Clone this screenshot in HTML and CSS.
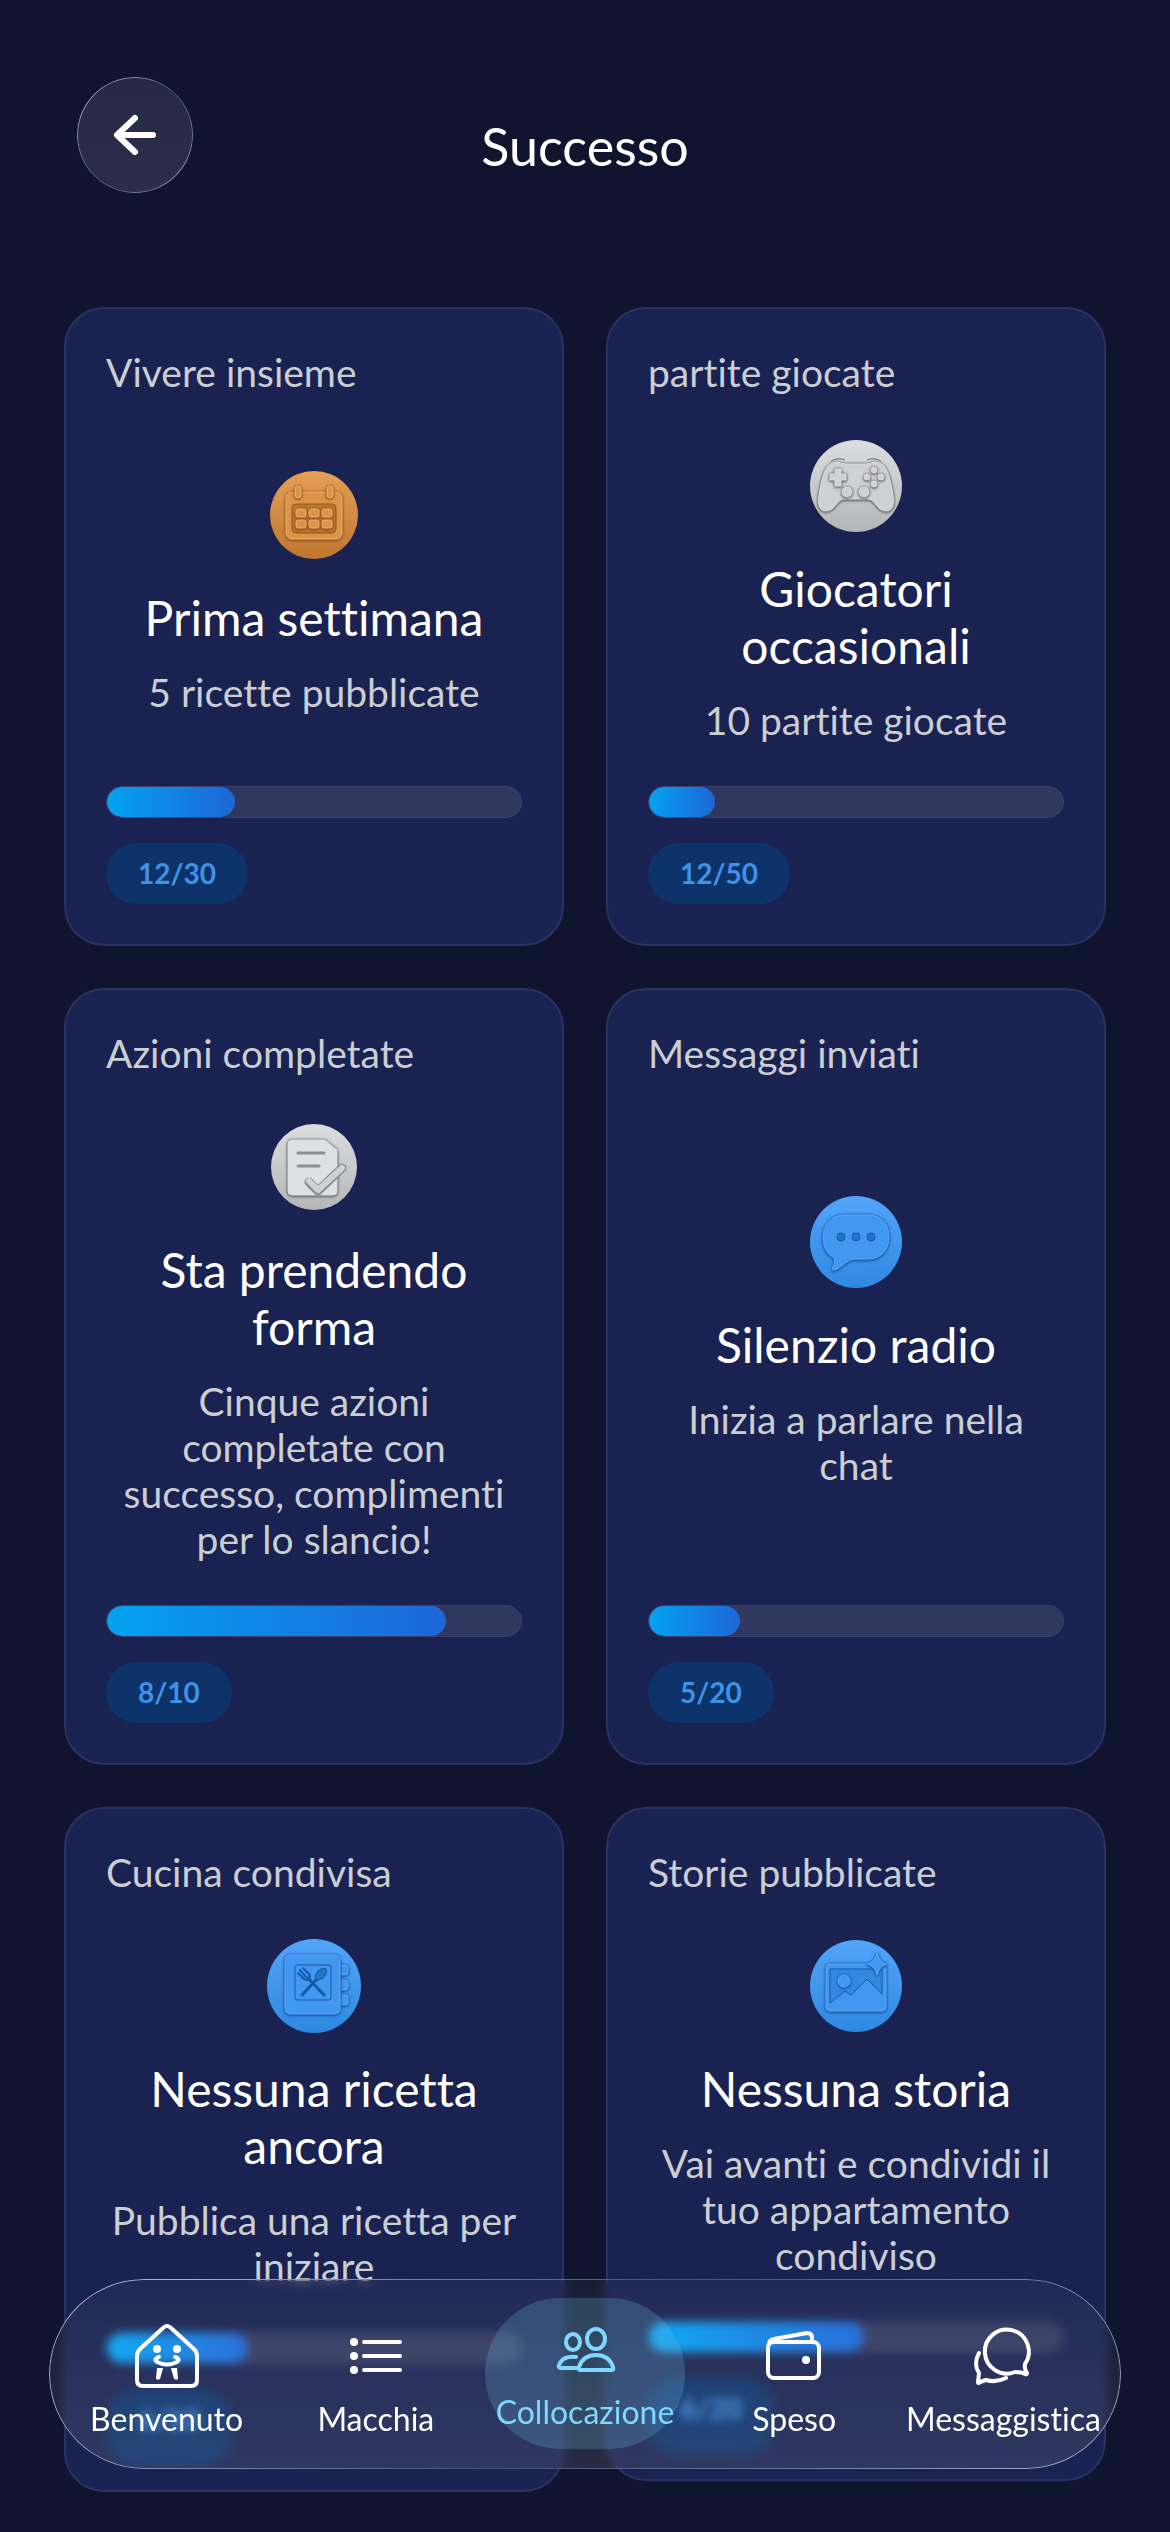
FILE: index.html
```html
<!DOCTYPE html>
<html lang="it">
<head>
    <meta charset="UTF-8">
    <meta name="viewport" content="width=device-width, initial-scale=1.0">
    <title>Successo</title>
    <link rel="stylesheet" href="styles.css">
</head>
<body>
    <!-- shared gradients for the badges -->
    <svg class="defs" width="0" height="0" aria-hidden="true">
        <defs>
            <linearGradient id="bronze" x1="0" y1="0" x2="0" y2="1">
                <stop offset="0" stop-color="#e6a055"/>
                <stop offset="1" stop-color="#bf7630"/>
            </linearGradient>
            <linearGradient id="silver" x1="0" y1="0" x2="0" y2="1">
                <stop offset="0" stop-color="#dcdddf"/>
                <stop offset="1" stop-color="#b4b6b8"/>
            </linearGradient>
            <linearGradient id="blue" x1="0" y1="0" x2="0" y2="1">
                <stop offset="0" stop-color="#52a5fa"/>
                <stop offset="1" stop-color="#2f88e0"/>
            </linearGradient>
        </defs>
    </svg>

    <header class="header">
        <button class="back" type="button" aria-label="Indietro">
            <svg width="48" height="48" viewBox="0 0 48 48"><path d="M24 7 6 24l18 17M7 24h35"/></svg>
        </button>
        <h1>Successo</h1>
    </header>

    <main class="grid">
        <article class="card">
            <h2 class="category">Vivere insieme</h2>
            <div class="content">
                <svg class="badge bronze" viewBox="0 0 96 96">
                    <circle cx="48" cy="48" r="44" fill="url(#bronze)"/>
                    <g class="raised">
                        <rect x="20" y="25" width="56" height="47" rx="6"/>
                    </g>
                    <rect class="sunken" x="26" y="37" width="44" height="29" rx="4"/>
                    <g class="raised">
                        <rect x="29" y="19" width="6" height="12" rx="3"/>
                        <rect x="61" y="19" width="6" height="12" rx="3"/>
                        <rect x="30" y="42" width="10" height="8" rx="2"/>
                        <rect x="43" y="42" width="10" height="8" rx="2"/>
                        <rect x="56" y="42" width="10" height="8" rx="2"/>
                        <rect x="30" y="53" width="10" height="8" rx="2"/>
                        <rect x="43" y="53" width="10" height="8" rx="2"/>
                        <rect x="56" y="53" width="10" height="8" rx="2"/>
                    </g>
                </svg>
                <h3>Prima settimana</h3>
                <p>5 ricette pubblicate</p>
            </div>
            <div class="progress" role="progressbar" aria-label="Prima settimana"><div class="fill" style="width: 31%"></div></div>
            <span class="count">12/30</span>
        </article>

        <article class="card">
            <h2 class="category">partite giocate</h2>
            <div class="content">
                <svg class="badge silver" viewBox="0 0 96 96">
                    <circle cx="48" cy="48" r="46" fill="url(#silver)"/>
                    <path class="edge" d="M23 23q7-4 14-1M59 22q7-3 14 1"/>
                    <g class="raised">
                        <path d="M30 24q3 2 8 2h20q5 0 8-2c12 0 14 10 17 22 3 14 5 27-5 27-9 0-11-12-18-12H36c-7 0-9 12-18 12-10 0-8-13-5-27 3-12 5-22 17-22z"/>
                    </g>
                    <g class="raised">
                        <path d="M27 31h6v5h5v6h-5v6h-6v-6h-5v-6h5z"/>
                        <circle cx="66" cy="32" r="3"/>
                        <circle cx="59" cy="39" r="3"/>
                        <circle cx="73" cy="39" r="3"/>
                        <circle cx="66" cy="46" r="3"/>
                        <circle cx="39" cy="54" r="5"/>
                        <circle cx="56" cy="54" r="5"/>
                    </g>
                </svg>
                <h3>Giocatori occasionali</h3>
                <p>10 partite giocate</p>
            </div>
            <div class="progress" role="progressbar" aria-label="Giocatori occasionali"><div class="fill" style="width: 16%"></div></div>
            <span class="count">12/50</span>
        </article>

        <article class="card">
            <h2 class="category">Azioni completate</h2>
            <div class="content">
                <svg class="badge silver" viewBox="0 0 96 96">
                    <circle cx="48" cy="48" r="43" fill="url(#silver)"/>
                    <g class="raised paper">
                        <path d="M26 21h33l12 10v41q0 4-4 4H26q-4 0-4-4V25q0-4 4-4z"/>
                    </g>
                    <path class="groove" d="M32 34h26M32 47h21"/>
                    <path class="tick-shadow" d="m43 63 9 9 24-23"/>
                    <path class="tick" d="m43 62 9 9 24-22"/>
                </svg>
                <h3>Sta prendendo forma</h3>
                <p>Cinque azioni completate con successo, complimenti per lo slancio!</p>
            </div>
            <div class="progress" role="progressbar" aria-label="Sta prendendo forma"><div class="fill" style="width: 82%"></div></div>
            <span class="count">8/10</span>
        </article>

        <article class="card">
            <h2 class="category">Messaggi inviati</h2>
            <div class="content">
                <svg class="badge blue" viewBox="0 0 96 96">
                    <circle cx="48" cy="48" r="46" fill="url(#blue)"/>
                    <g class="raised">
                        <path d="M37 21h23c13 0 21 9 21 22s-8 22-21 22H46c-7 0-12 9-20 11-2 0-2-1-1-3 2-4 2-6 1-9-7-4-11-11-11-20 0-14 9-23 22-23z"/>
                    </g>
                    <g class="sunken">
                        <circle cx="33" cy="43" r="4"/>
                        <circle cx="48" cy="43" r="4"/>
                        <circle cx="63" cy="43" r="4"/>
                    </g>
                </svg>
                <h3>Silenzio radio</h3>
                <p>Inizia a parlare nella chat</p>
            </div>
            <div class="progress" role="progressbar" aria-label="Silenzio radio"><div class="fill" style="width: 22%"></div></div>
            <span class="count">5/20</span>
        </article>

        <article class="card natural">
            <h2 class="category">Cucina condivisa</h2>
            <div class="content">
                <svg class="badge blue" viewBox="0 0 96 96">
                    <circle cx="48" cy="48" r="47" fill="url(#blue)"/>
                    <g class="raised">
                        <rect x="71" y="27" width="11" height="10" rx="3"/>
                        <rect x="71" y="42" width="11" height="10" rx="3"/>
                        <rect x="71" y="57" width="11" height="10" rx="3"/>
                    </g>
                    <g class="raised">
                        <rect x="19" y="17" width="55" height="59" rx="5"/>
                    </g>
                    <rect class="edge" x="29" y="27" width="36" height="35" rx="2"/>
                    <path class="utensil" d="M36 57 51 41M58 57 42 40"/>
                    <ellipse class="sunken" cx="55" cy="36" rx="7" ry="4" transform="rotate(-45 55 36)"/>
                    <path class="tines" d="m32 35 6 6q3 2 5 0t0-5l-6-6M34 32l6 7"/>
                </svg>
                <h3>Nessuna ricetta ancora</h3>
                <p>Pubblica una ricetta per iniziare</p>
            </div>
            <div class="progress" role="progressbar" aria-label="Nessuna ricetta ancora"><div class="fill" style="width: 34%"></div></div>
            <span class="count">6/10</span>
        </article>

        <article class="card natural">
            <h2 class="category">Storie pubblicate</h2>
            <div class="content">
                <svg class="badge blue" viewBox="0 0 96 96">
                    <circle cx="48" cy="48" r="46" fill="url(#blue)"/>
                    <g class="raised">
                        <rect x="18" y="26" width="60" height="47" rx="4"/>
                    </g>
                    <path class="sky" d="M22 31h52v25L60 42q-1-1-2 0L43 57l-6-4-15 12z"/>
                    <g class="raised">
                        <circle cx="36" cy="43" r="6"/>
                        <path d="M69 15q2 9 10 11-8 2-10 11-2-9-10-11 8-2 10-11z"/>
                    </g>
                </svg>
                <h3>Nessuna storia</h3>
                <p>Vai avanti e condividi il tuo appartamento condiviso</p>
            </div>
            <div class="progress" role="progressbar" aria-label="Nessuna storia"><div class="fill" style="width: 52%"></div></div>
            <span class="count">6/20</span>
        </article>
    </main>

    <nav class="tabbar">
        <a class="tab" href="#">
            <svg viewBox="0 0 64 64">
                <path d="M28 4q4-4 8 0l23 21q3 3 3 7v24q0 6-6 6H8q-6 0-6-6V32q0-4 3-7z"/>
                <g class="solid">
                    <circle cx="22" cy="25" r="4"/>
                    <circle cx="42" cy="25" r="4"/>
                    <path d="M22 44h6l-3 11q-4 2-4-1zM36 44h6l1 10q0 3-4 1z"/>
                </g>
                <path d="M24 33q-6 2-2 5 10 5 20 0 4-3-2-5"/>
            </svg>
            <span>Benvenuto</span>
        </a>
        <a class="tab" href="#">
            <svg viewBox="0 0 64 64">
                <path d="M20 18h36M20 32h36M20 46h36"/>
                <g class="solid">
                    <circle cx="10" cy="18" r="4"/>
                    <circle cx="10" cy="32" r="4"/>
                    <circle cx="10" cy="46" r="4"/>
                </g>
            </svg>
            <span>Macchia</span>
        </a>
        <a class="tab active" href="#" aria-current="page">
            <svg viewBox="0 0 64 64">
                <ellipse cx="20" cy="25" rx="7" ry="8"/>
                <ellipse cx="43" cy="22" rx="9" ry="10"/>
                <path d="M24 51H8q-3 0-2-3 4-10 17-8"/>
                <path d="M27 53q-2 0-1-3 4-12 17-12t17 12q1 3-1 3z"/>
            </svg>
            <span>Collocazione</span>
        </a>
        <a class="tab" href="#">
            <svg viewBox="0 0 64 64">
                <rect x="6" y="18" width="51" height="36" rx="6"/>
                <path d="M7 20q0-4 5-5l33-6q5 0 5 5v4"/>
                <circle class="solid" cx="44" cy="36" r="4"/>
            </svg>
            <span>Speso</span>
        </a>
        <a class="tab" href="#">
            <svg viewBox="0 0 64 64">
                <path d="M54 40a22 22 0 1 0-10 8q7 0 10 2 2 1 2-1-3-5-2-9z"/>
                <path d="M8 29q-6 11 0 20l-1 9q0 2 2 0l6-2q10 3 20-2"/>
            </svg>
            <span>Messaggistica</span>
        </a>
    </nav>
</body>
</html>
```
FILE: styles.css
```css
* {
    box-sizing: border-box;
}
body {
    margin: 0;
    min-height: 100vh;
    background-color: #10142e;
    color: white;
    font-family: Lato, sans-serif;
    font-variant-ligatures: none;
}
h1, h2, h3, p {
    margin: 0;
    font-weight: normal;
}
.defs {
    position: absolute;
}

/* header */
.header {
    display: grid;
    grid-template-columns: 116px 1fr 116px;
    align-items: center;
    padding: 77px 77px 114px;
}
.header h1 {
    padding-top: 22px;
    font-size: 52px;
    line-height: 60px;
    text-align: center;
}
.back {
    display: flex;
    align-items: center;
    justify-content: center;
    position: relative;
    width: 116px;
    height: 116px;
    padding: 0;
    border: none;
    border-radius: 50%;
    background: linear-gradient(180deg, #262a44, #2b2e4b);
    cursor: pointer;
}
.back svg {
    fill: none;
    stroke: white;
    stroke-width: 6;
    stroke-linecap: round;
    stroke-linejoin: round;
}

/* thin glass rim, bright on two opposite corners */
.back::before, .tabbar::before {
    content: "";
    position: absolute;
    inset: 0;
    padding: 1px;
    border-radius: inherit;
    background: linear-gradient(135deg, #c3c5dc, #8488b0 25%, #4a4e70 50%, #7478a0 75%, #b3b5cc);
    -webkit-mask: linear-gradient(#000 0 0) content-box, linear-gradient(#000 0 0);
    -webkit-mask-composite: xor;
    mask-composite: exclude;
    pointer-events: none;
}

/* cards */
.grid {
    display: grid;
    grid-template-columns: 1fr 1fr;
    gap: 42px;
    padding: 0 64px 39px;
}
.card {
    display: flex;
    flex-direction: column;
    padding: 40px;
    border: 2px solid #2d3162;
    border-radius: 40px;
    background-color: #192250;
}
.card.natural {
    align-self: start;
}
.category {
    margin-bottom: 43px;
    color: #cbced3;
    font-size: 39px;
    line-height: 46px;
}
.content {
    display: flex;
    flex: 1;
    flex-direction: column;
    align-items: center;
    justify-content: center;
    margin-bottom: 43px;
    text-align: center;
}
.content h3 {
    margin: 26px 0 23px;
    font-size: 48px;
    line-height: 57px;
}
.content p {
    padding: 0 4px;
    color: #cbced3;
    font-size: 39px;
    line-height: 46px;
}
.progress {
    height: 32px;
    margin-bottom: 25px;
    border: 1px solid #3c406c;
    border-radius: 16px;
    background-color: #31385f;
    overflow: hidden;
}
.fill {
    height: 100%;
    border-radius: 16px;
    background: linear-gradient(90deg, #03a2f1, #1e66d8);
}
.count {
    align-self: flex-start;
    padding: 0 32px;
    border-radius: 31px;
    background-color: #0e336b;
    color: #3f93e6;
    font-size: 28px;
    font-weight: bold;
    line-height: 61px;
}
/* stretched reflection under the glass bar */
.natural .count {
    box-shadow: 0 16px #0e336b;
}

/* badges */
.badge {
    width: 96px;
    height: 96px;
    --face: #4198f0;
    --shade: #1658a6;
    --light: #5faafa;
    --deep: #2474c8;
}
.bronze {
    --face: #dd9448;
    --shade: #8f5418;
    --light: #f0b473;
    --deep: #bd7630;
}
.silver {
    --face: #d0d1d3;
    --shade: #66686b;
    --light: #dededf;
    --deep: #8c8e91;
}
.raised {
    fill: var(--face);
    stroke: var(--light);
    stroke-width: 1;
    filter: drop-shadow(0 0 1px var(--shade)) drop-shadow(0 1px 1px var(--shade));
}
.paper {
    fill: #dfe0e1;
}
.sunken {
    fill: var(--deep);
    stroke: var(--shade);
    stroke-width: 1;
}
.edge {
    fill: none;
    stroke: var(--shade);
    stroke-width: 1;
}
.sky {
    fill: #3189e2;
    stroke: var(--shade);
    stroke-width: 1;
}
.groove, .tick, .tick-shadow, .utensil, .tines {
    fill: none;
    stroke: var(--deep);
    stroke-width: 3;
    stroke-linecap: round;
    stroke-linejoin: round;
}
.utensil, .tines {
    stroke: var(--shade);
}
.tines {
    stroke-width: 2;
}
.tick {
    stroke: var(--face);
    stroke-width: 6;
}
.tick-shadow {
    stroke-width: 9;
}

/* bottom bar */
.tabbar {
    position: fixed;
    right: 49px;
    bottom: 63px;
    left: 49px;
    display: flex;
    padding: 19px 13px 20px;
    border-radius: 95px;
    background: linear-gradient(180deg, rgba(255, 255, 255, 0.04), rgba(255, 255, 255, 0.1));
    backdrop-filter: blur(5px);
}
.tab {
    display: flex;
    flex: 1 1 0;
    flex-direction: column;
    align-items: center;
    justify-content: center;
    min-width: 0;
    height: 151px;
    margin: 0 5px;
    padding-top: 14px;
    border-radius: 76px;
    color: white;
    font-size: 32px;
    line-height: 36px;
    text-decoration: none;
    white-space: nowrap;
}
.tab svg {
    width: 64px;
    height: 64px;
    margin-bottom: 13px;
    fill: none;
    stroke: currentColor;
    stroke-width: 4;
    stroke-linecap: round;
    stroke-linejoin: round;
}
.tab .solid {
    fill: currentColor;
    stroke: none;
}
.tab.active {
    padding-top: 0;
    background-color: rgba(110, 190, 220, 0.24);
    color: #80d8ff;
}
```
